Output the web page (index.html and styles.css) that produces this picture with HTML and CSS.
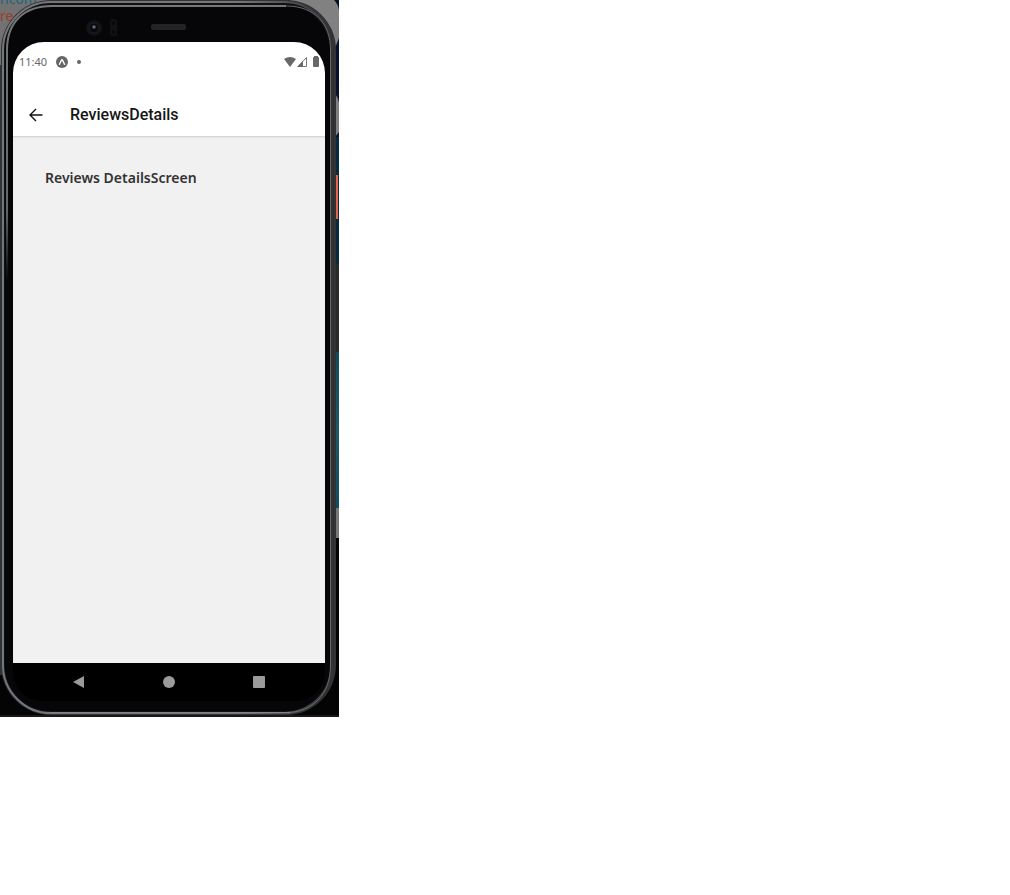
FILE: index.html
```html
<!DOCTYPE html>
<html lang="en">
<head>
<meta charset="utf-8">
<title>ReviewsDetails</title>
<link rel="stylesheet" href="styles.css">
</head>
<body>
<main class="device">
  <svg class="frame" viewBox="0 0 339 717" aria-hidden="true">
    <defs>
      <linearGradient id="rim" x1="0" y1="0" x2="339" y2="0" gradientUnits="userSpaceOnUse">
        <stop offset="0" stop-color="#74767d"/><stop offset=".7" stop-color="#77767c"/><stop offset=".9" stop-color="#444549"/><stop offset="1" stop-color="#303234"/>
      </linearGradient>
      <linearGradient id="inner" x1="0" y1="0" x2="0" y2="280" gradientUnits="userSpaceOnUse">
        <stop offset="0" stop-color="#777"/><stop offset=".75" stop-color="#666"/><stop offset="1" stop-color="#08080a"/>
      </linearGradient>
      <linearGradient id="sea" x1="0" y1="0" x2="0" y2="1">
        <stop offset="0" stop-color="#124b5e"/><stop offset=".5" stop-color="#1d596b"/><stop offset="1" stop-color="#124c61"/>
      </linearGradient>
    </defs>
    <rect width="339" height="717" fill="#040405"/>
    <rect width="70" height="66" fill="#727272"/>
    <text class="code blue" x="0" y="4">ncom</text>
    <text class="code red" x="0" y="21">re</text>
    <rect x="290" width="49" height="137" fill="#07112e"/>
    <path d="M290 0H334Q338 4 339 10V38L335 48H290ZM335 94Q338 97 339 103V132L335 137Z" fill="#818181"/>
    <rect x="335" y="137" width="4" height="127" fill="#062b40"/>
    <rect x="335" y="175" width="3" height="44" fill="#e0674f"/>
    <rect x="335" y="264" width="4" height="88" fill="#292929"/>
    <rect x="335" y="352" width="4" height="156" fill="url(#sea)"/>
    <rect x="335" y="508" width="4" height="30" fill="#777"/>
    <rect x="0" y="65" width="4" height="610" fill="#303335"/>
    <rect y="715" width="339" height="2" fill="#1b1719"/>
    <rect x="1" y="0" width="335" height="715" rx="50" fill="#303234"/>
    <rect x="3" y="2" width="329" height="711" rx="48" fill="#101113" stroke="url(#rim)" stroke-width="2"/>
    <rect x="330" y="50" width="6" height="615" fill="#303234"/>
    <rect x="5" y="5" width="325" height="706" rx="46" fill="#060608"/>
    <path d="M7 280V50C7 22 24 6 52 6H286" fill="none" stroke="url(#inner)" stroke-width="2"/>
    <path d="M286 6C315 6 330.500 24 330.500 50V665C330.500 694 313 712.500 286 712.500" fill="none" stroke="#68686a"/>
    <path d="M50 712.500H290" stroke="#858187"/>
    <circle cx="94" cy="28" r="8" fill="#111214"/>
    <circle cx="94" cy="28" r="5" fill="#07090c" stroke="#1e2023"/>
    <circle cx="94" cy="27" r="2" fill="#3b4050"/><circle cx="94" cy="27" r="1" fill="#7b8194"/>
    <rect x="110" y="19" width="7" height="17" rx="3" fill="#111214"/>
    <circle cx="113.500" cy="23" r="2" fill="#08090a"/><circle cx="113.500" cy="32" r="2" fill="#08090a"/>
    <rect x="151" y="24" width="35" height="6" rx="2" fill="#242424"/>
  </svg>
  <div class="screen">
    <div class="status">
      <span class="time">11:40</span>
      <svg class="badge" viewBox="0 0 12 12" aria-hidden="true"><circle cx="6" cy="6" r="6" fill="#666"/><path d="M3.500 8.300L5.300 4.500Q6 3 6.700 4.500L8.500 8.300" fill="none" stroke="#fff" stroke-width="1.400" stroke-linecap="round"/></svg>
      <span class="dot"></span>
      <svg class="signals" viewBox="0 0 36 12" aria-hidden="true" fill="#686868">
        <path d="M0 3Q6-1 12 3L6 11Z"/>
        <path d="M14 10.500L22.500 1.500V10.500Z" fill="none" stroke="#777"/><path d="M13 11L19 5V11Z"/>
        <path d="M30 1V0H34V1Q35 1 35 2V10Q35 11 34 11H30Q29 11 29 10V2Q29 1 30 1Z"/>
      </svg>
    </div>
    <header class="bar">
      <button class="back" aria-label="Back"><svg viewBox="0 0 14 14" aria-hidden="true"><path d="M13.500 7H1.500M7 1L1 7L7 13" fill="none" stroke="#111" stroke-width="1.400"/></svg></button>
      <h1>ReviewsDetails</h1>
    </header>
    <section class="content"><p>Reviews DetailsScreen</p></section>
    <nav class="nav" aria-label="System navigation">
      <button aria-label="System back"><svg viewBox="0 0 12 12" fill="#9b9b9b"><path d="M0 6L11 0V12Z"/></svg></button>
      <button aria-label="Home"><svg viewBox="0 0 12 12" fill="#9b9b9b"><circle cx="6" cy="6" r="6"/></svg></button>
      <button aria-label="Recent apps"><svg viewBox="0 0 12 12" fill="#9b9b9b"><rect width="12" height="12" rx="1"/></svg></button>
    </nav>
  </div>
</main>
</body>
</html>
```
FILE: styles.css
```css
* { box-sizing: border-box; }
body { margin: 0; background: #fff; font-family: Roboto, sans-serif; }
button { padding: 0; border: 0; background: none; display: flex; align-items: center; justify-content: center; }
.device { position: relative; width: 339px; max-width: 100%; padding: 42px 14px 16px 13px; }
.frame { position: absolute; inset: 0; width: 100%; height: 100%; }
.code { font: 14px "Noto Sans", sans-serif; }
.blue { fill: #23657c; }
.red { fill: #a33b28; }
.screen { position: relative; display: flex; flex-direction: column; border-radius: 31px 31px 30px 30px; overflow: hidden; background: #000; }
.status { display: flex; align-items: center; height: 40px; padding: 0 5px 0 6px; background: #fff; }
.time { font: 11px/16px "Noto Sans", sans-serif; color: #666; }
.badge { width: 12px; height: 12px; margin-left: 9px; }
.dot { width: 4px; height: 4px; margin-left: 9px; border-radius: 50%; background: #666; }
.signals { width: 36px; height: 12px; margin-left: auto; }
.bar { display: flex; align-items: center; gap: 27px; height: 54px; padding: 11px 16px 0; background: #fff; }
.back svg { width: 14px; height: 14px; }
h1 { margin: 0; font-size: 16px; line-height: 20px; font-weight: 500; color: #151515; }
.content { min-height: 527px; padding: 32px; background: #f1f1f1; box-shadow: inset 0 2px 2px -1px #ccc; }
.content p { margin: 0; font: 600 14px/20px "Noto Sans", sans-serif; color: #333; }
.nav { display: flex; justify-content: center; gap: 78px; height: 38px; background: #000; }
.nav svg { width: 12px; height: 12px; }
```
